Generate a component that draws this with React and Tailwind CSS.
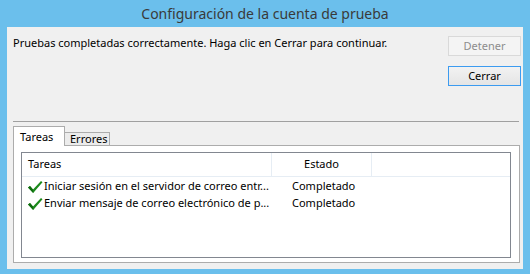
import React from 'react';

const font = { fontFamily: '"Noto Sans", "Liberation Sans", sans-serif' };

const Check = () => (
  <svg width="16" height="14" viewBox="0 0 16 14" className="shrink-0">
    <path d="M1 7.5 L3 6 L6 9.5 L14 1 L15.5 2.2 L6.2 13 Z" fill="#1c8a1c" />
    <path d="M1 7.5 L3 6 L6 9.5 L6.2 13 Z" fill="#0f6b0f" />
  </svg>
);

const rows = [
  { task: 'Iniciar sesión en el servidor de correo entr...', status: 'Completado' },
  { task: 'Enviar mensaje de correo electrónico de p...', status: 'Completado' },
];

export default function App() {
  return (
    <div
      className="w-[530px] h-[274px] bg-[#6bbfec] flex flex-col text-[11px] text-black"
      style={font}
    >
      <div className="h-[27px] flex items-center justify-center text-[14px] text-[#3a3a3a]">
        Configuración de la cuenta de prueba
      </div>

      <div className="flex-1 mx-[7px] mb-[5px] bg-[#f0f0f0] flex flex-col">
        <div className="flex justify-between items-start pl-[6px] pr-[2px] pt-[8px]">
          <div className="leading-[16px]">
            Pruebas completadas correctamente. Haga clic en Cerrar para continuar.
          </div>
          <div className="flex flex-col gap-[10px] mt-[1px]">
            <div className="w-[73px] h-[20px] border border-[#d9d9d9] bg-[#f4f4f4] text-[#8d8d8d] flex items-center justify-center">
              Detener
            </div>
            <div className="w-[73px] h-[20px] border border-[#3c9bf0] bg-gradient-to-b from-[#f2f2f2] to-[#e5e5e5] flex items-center justify-center">
              Cerrar
            </div>
          </div>
        </div>

        <div className="mt-[35px] ml-[6px] mr-[4px] h-px bg-[#a0a0a0]" />

        <div className="mt-[4px] ml-[6px] h-[19px] flex items-end">
          <div className="relative z-10 -mb-px h-[20px] w-[52px] border border-b-0 border-[#acacac] bg-white pl-[6px] pt-[2px] leading-[16px]">
            Tareas
          </div>
          <div className="h-[13px] w-[45px] border-t border-r border-[#acacac] bg-[#ececec] pl-[5px] leading-[11px]">
            Errores
          </div>
        </div>

        <div className="flex-1 ml-[6px] mr-[3px] mb-[6px] border border-[#acacac] bg-white pl-[7px] pr-[8px] pt-[6px] pb-[4px] flex flex-col">
          <div className="flex-1 border border-[#828790] bg-white flex flex-col">
            <div className="h-[24px] flex border-b border-[#e6edf4]">
              <div className="w-[250px] border-r border-[#e6edf4] pl-[6px] flex items-center">
                Tareas
              </div>
              <div className="w-[100px] border-r border-[#e6edf4] flex items-center justify-center">
                Estado
              </div>
              <div className="flex-1" />
            </div>
            <div className="pt-px">
              {rows.map((r) => (
                <div key={r.task} className="h-[17px] flex items-center">
                  <div className="w-[250px] pl-[5px] flex items-center gap-[1px] overflow-hidden whitespace-nowrap">
                    <Check />
                    <span>{r.task}</span>
                  </div>
                  <div className="pl-[20px] whitespace-nowrap">{r.status}</div>
                </div>
              ))}
            </div>
          </div>
        </div>
      </div>
    </div>
  );
}
